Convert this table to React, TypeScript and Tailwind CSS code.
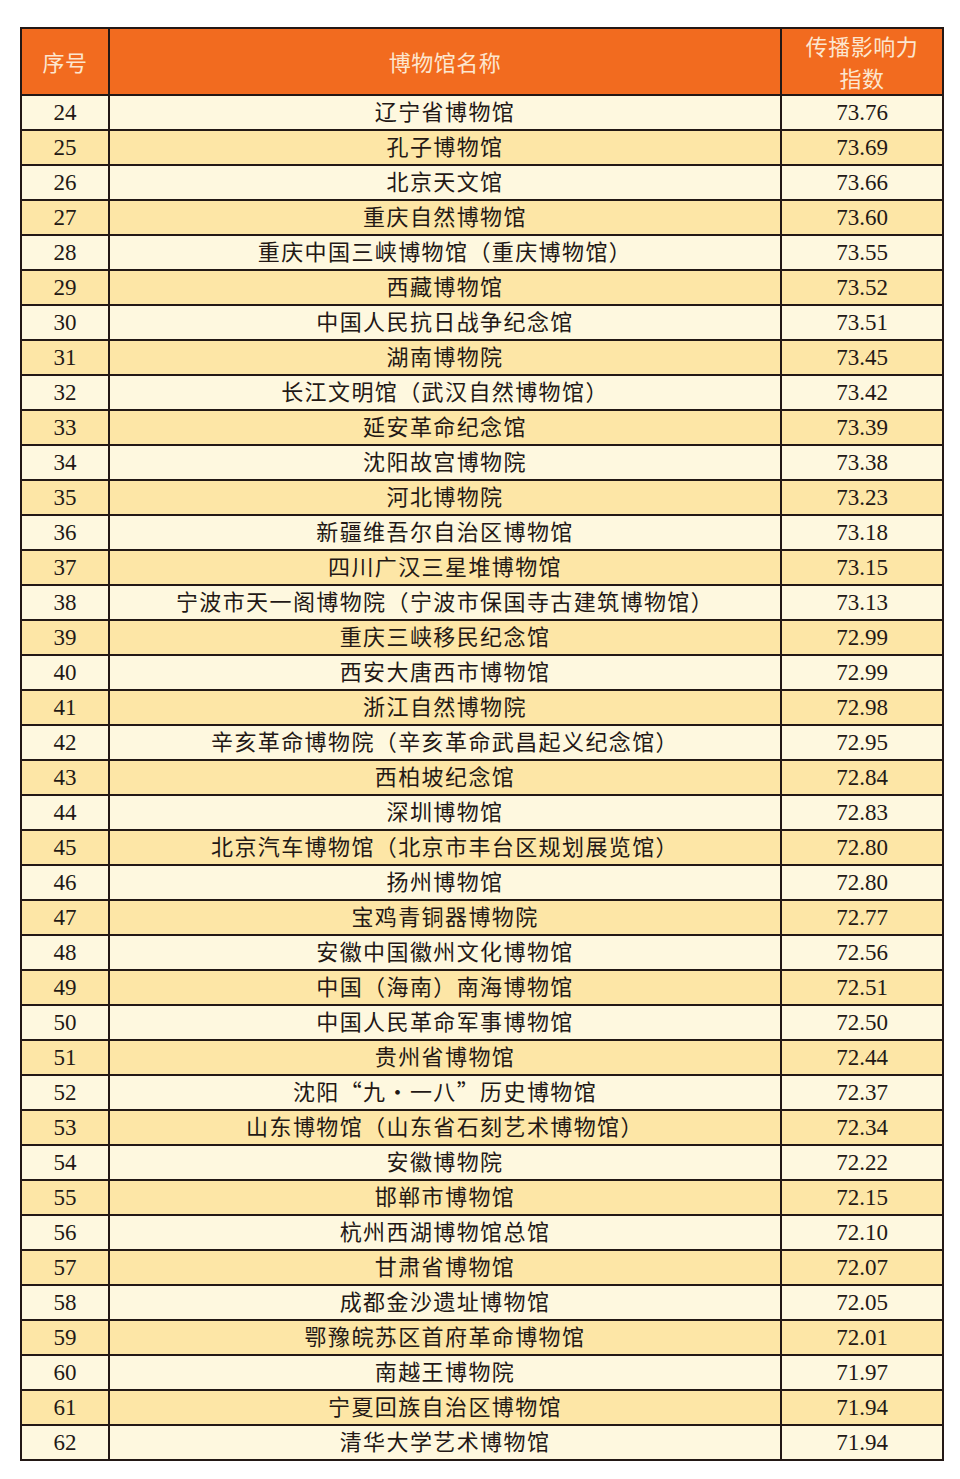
import React from "react";

const rows: [number, string, string][] = [
  [24, "辽宁省博物馆", "73.76"],
  [25, "孔子博物馆", "73.69"],
  [26, "北京天文馆", "73.66"],
  [27, "重庆自然博物馆", "73.60"],
  [28, "重庆中国三峡博物馆（重庆博物馆）", "73.55"],
  [29, "西藏博物馆", "73.52"],
  [30, "中国人民抗日战争纪念馆", "73.51"],
  [31, "湖南博物院", "73.45"],
  [32, "长江文明馆（武汉自然博物馆）", "73.42"],
  [33, "延安革命纪念馆", "73.39"],
  [34, "沈阳故宫博物院", "73.38"],
  [35, "河北博物院", "73.23"],
  [36, "新疆维吾尔自治区博物馆", "73.18"],
  [37, "四川广汉三星堆博物馆", "73.15"],
  [38, "宁波市天一阁博物院（宁波市保国寺古建筑博物馆）", "73.13"],
  [39, "重庆三峡移民纪念馆", "72.99"],
  [40, "西安大唐西市博物馆", "72.99"],
  [41, "浙江自然博物院", "72.98"],
  [42, "辛亥革命博物院（辛亥革命武昌起义纪念馆）", "72.95"],
  [43, "西柏坡纪念馆", "72.84"],
  [44, "深圳博物馆", "72.83"],
  [45, "北京汽车博物馆（北京市丰台区规划展览馆）", "72.80"],
  [46, "扬州博物馆", "72.80"],
  [47, "宝鸡青铜器博物院", "72.77"],
  [48, "安徽中国徽州文化博物馆", "72.56"],
  [49, "中国（海南）南海博物馆", "72.51"],
  [50, "中国人民革命军事博物馆", "72.50"],
  [51, "贵州省博物馆", "72.44"],
  [52, "沈阳“九·一八”历史博物馆", "72.37"],
  [53, "山东博物馆（山东省石刻艺术博物馆）", "72.34"],
  [54, "安徽博物院", "72.22"],
  [55, "邯郸市博物馆", "72.15"],
  [56, "杭州西湖博物馆总馆", "72.10"],
  [57, "甘肃省博物馆", "72.07"],
  [58, "成都金沙遗址博物馆", "72.05"],
  [59, "鄂豫皖苏区首府革命博物馆", "72.01"],
  [60, "南越王博物院", "71.97"],
  [61, "宁夏回族自治区博物馆", "71.94"],
  [62, "清华大学艺术博物馆", "71.94"],
];

const numFont = { fontFamily: '"Liberation Serif", "Noto Sans CJK SC", serif' };
const cjkFont = { fontFamily: '"Noto Sans CJK SC", sans-serif' };

export default function App() {
  return (
    <div className="w-[960px] h-[1479px] bg-white pt-[27px] pl-[20px]">
      <div className="w-[924px] border-2 border-[#231815]">
        <div
          className="grid grid-cols-[88px_672px_1fr] h-[65px] bg-[#F26B1F] text-[#FCE6CF] text-[22px] tracking-[0.5px]"
          style={cjkFont}
        >
          <div className="border-r-2 border-[#231815] flex items-center justify-center pb-[4px]">序号</div>
          <div className="border-r-2 border-[#231815] flex items-center justify-center pb-[4px]">博物馆名称</div>
          <div className="flex flex-col items-center justify-center leading-[32px] pb-[4px]">
            <span>传播影响力</span>
            <span>指数</span>
          </div>
        </div>
        {rows.map(([n, name, v], i) => (
          <div
            key={n}
            className={
              "grid grid-cols-[88px_672px_1fr] h-[35px] border-t-2 border-[#231815] text-[#231815] leading-none " +
              (i % 2 === 0 ? "bg-[#FEF8DF]" : "bg-[#FDE6A6]")
            }
          >
            <div className="border-r-2 border-[#231815] flex items-center justify-center text-[23px] pb-[1px]" style={numFont}>
              {n}
            </div>
            <div
              className="border-r-2 border-[#231815] flex items-center justify-center whitespace-nowrap text-[22px] tracking-[1.4px] pb-[5px]"
              style={cjkFont}
            >
              {name}
            </div>
            <div className="flex items-center justify-center text-[23px] pb-[1px]" style={numFont}>
              {v}
            </div>
          </div>
        ))}
      </div>
    </div>
  );
}
